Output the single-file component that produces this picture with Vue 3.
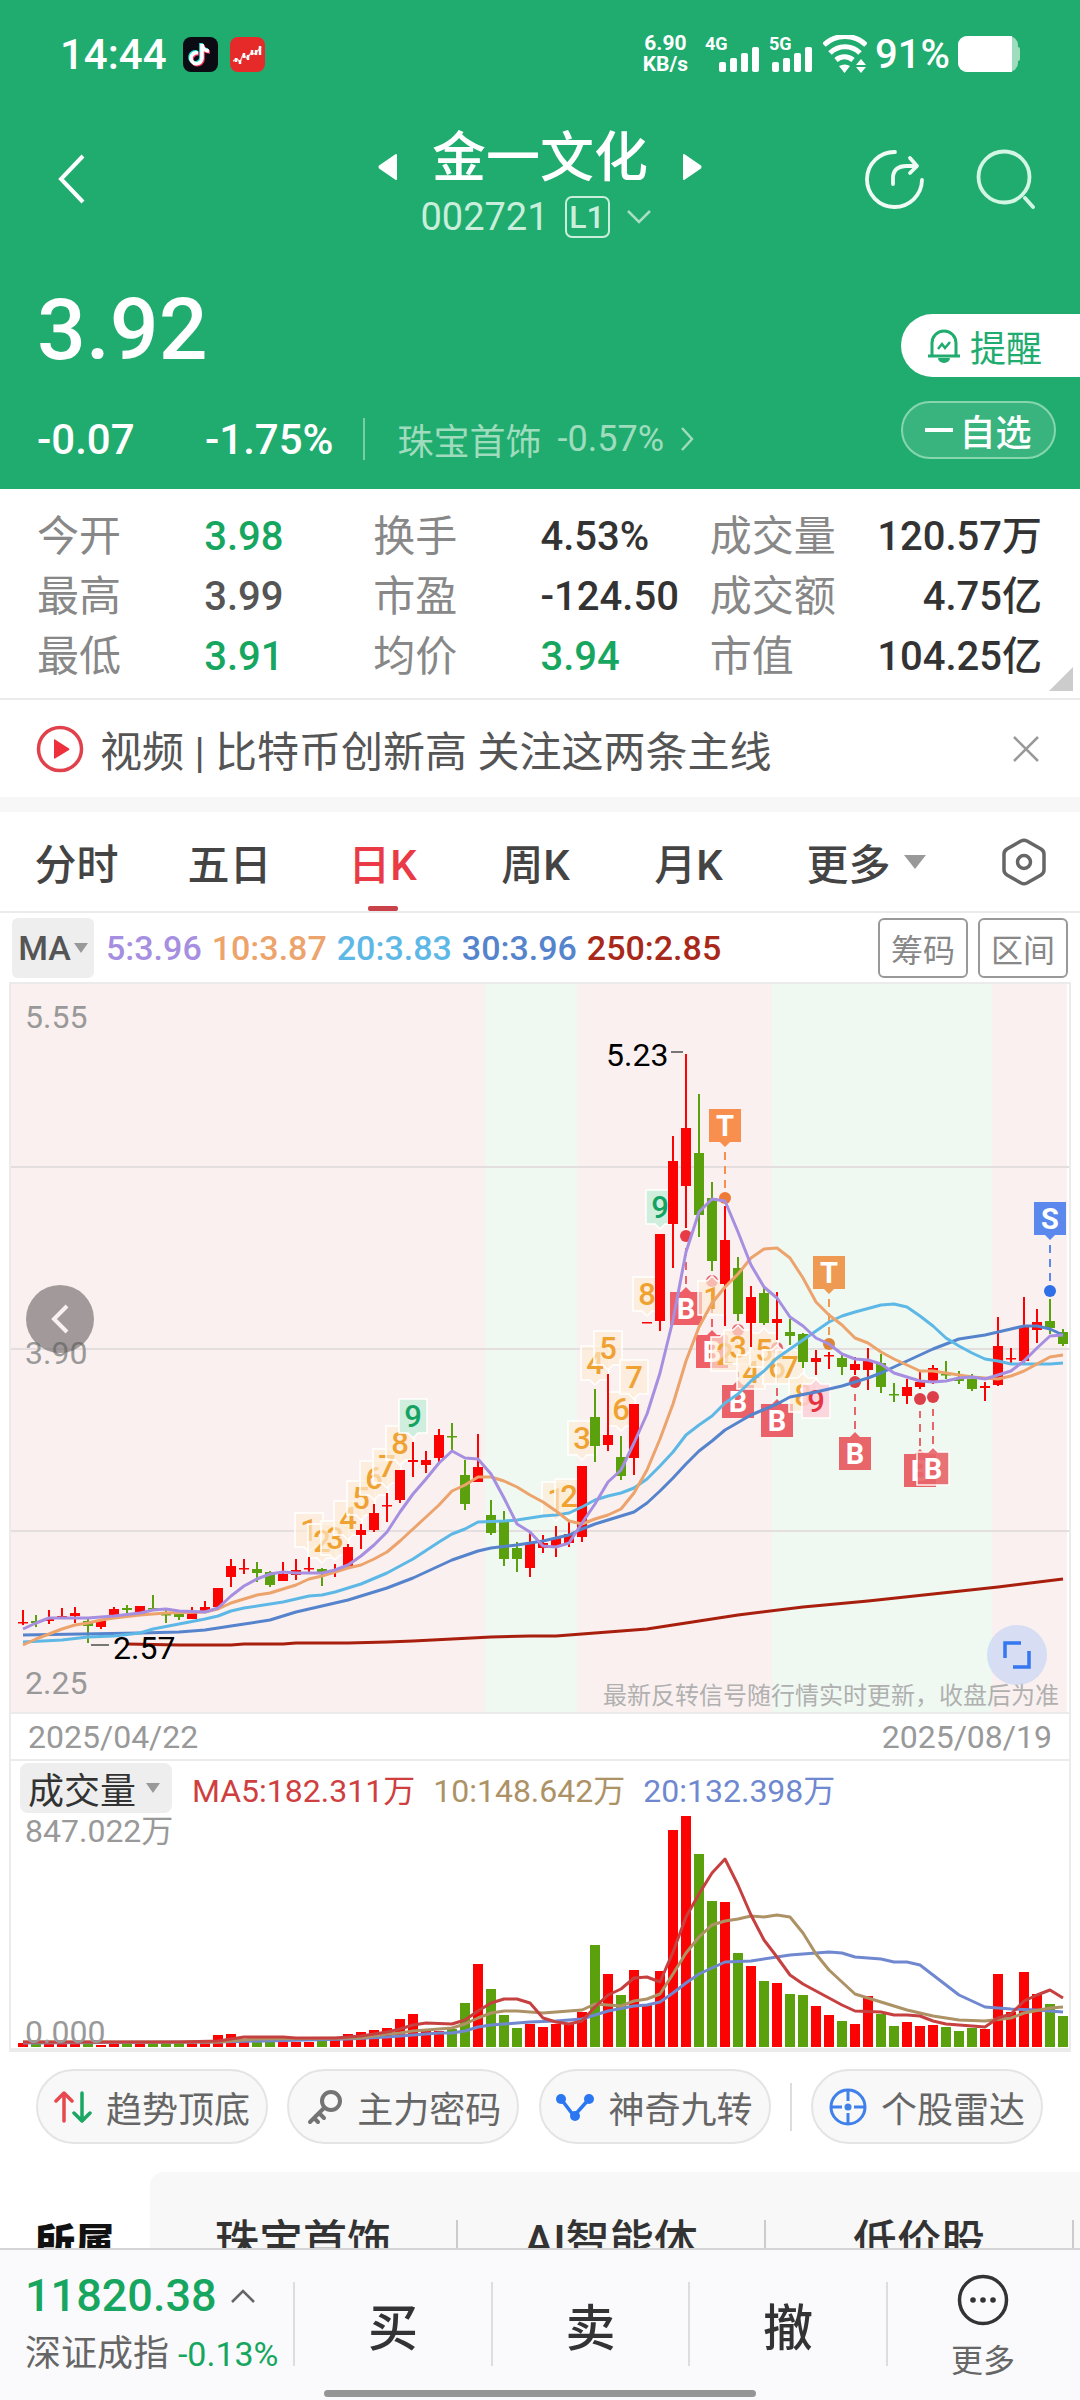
<template>
  <div class="page">
    <header class="header">
      <div class="status-bar">
        <span class="clock">14:44</span>
        <svg class="app-icon" viewBox="0 0 35 35">
          <rect width="35" height="35" rx="8" fill="#0b0b14" />
          <g fill="none" stroke-width="3.6">
            <path d="M15 16a5.5 5.5 0 1 0 4 5.5V7c0 4 3 7 7 7" stroke="#2ce5e0" transform="translate(-1 -1)" />
            <path d="M15 16a5.5 5.5 0 1 0 4 5.5V7c0 4 3 7 7 7" stroke="#f9335b" transform="translate(1 1)" />
            <path d="M15 16a5.5 5.5 0 1 0 4 5.5V7c0 4 3 7 7 7" stroke="#fff" />
          </g>
        </svg>
        <svg class="app-icon second" viewBox="0 0 35 35">
          <rect width="35" height="35" rx="8" fill="#e62a2a" />
          <path d="M3 24l4-2 3 3 3-7 4 3 4-5 4 1 6-7" fill="none" stroke="#ffc9c9" stroke-width="1.5" />
          <path d="M6 21v4M10 23v4M14 16v5M18 18v5M22 13v5M26 13v5M30 9v9" stroke="#fff" stroke-width="2.5" />
        </svg>
        <span class="speed">6.90<br />KB/s</span>
        <svg class="signal" viewBox="0 -8 110 48" role="img" aria-label="4G 5G">
          <g fill="#fff" font-family="Roboto" font-size="18" font-weight="700">
            <text x="0" y="16">4G</text>
            <text x="64" y="16">5G</text>
            <rect v-for="(h, i) in [10, 14, 19, 25]" :key="'a' + i" :x="14 + i * 11" :y="38 - h" width="7" :height="h" rx="2" />
            <rect v-for="(h, i) in [10, 14, 19, 25]" :key="'b' + i" :x="67 + i * 11" :y="38 - h" width="7" :height="h" rx="2" />
          </g>
        </svg>
        <svg class="wifi" viewBox="0 0 44 38">
          <g fill="none" stroke="#fff" stroke-width="5">
            <path d="M1 10a30 30 0 0 1 42 0" />
            <path d="M7 18a21 21 0 0 1 30 0" />
            <path d="M13 25a13 13 0 0 1 17 0" />
          </g>
          <path d="M16 31q6-3 11 0l-5.500 7zM33 30l5-6 5 6zM33 32h10l-5 6z" fill="#fff" />
        </svg>
        <span class="battery-text">91%</span>
        <svg class="battery" viewBox="0 0 62 36">
          <rect width="60" height="36" rx="9" fill="#9ddcbc" />
          <rect x="58" y="11" width="4" height="14" rx="2" fill="#9ddcbc" />
          <path d="M9 0H54V36H9a9 9 0 0 1-9-9V9a9 9 0 0 1 9-9z" fill="#fff" />
        </svg>
      </div>

      <nav class="nav">
        <button class="icon-btn back" aria-label="返回">
          <svg width="30" height="52" viewBox="0 0 30 52"><path d="M26 3L4 26l22 23" fill="none" stroke="#fff" stroke-width="4" /></svg>
        </button>
        <div class="title-box">
          <div class="title-row">
            <button class="icon-btn" aria-label="上一只">
              <svg width="20" height="28" viewBox="0 0 20 28"><path d="M18 2v24L2 15q-1-1 0-2z" fill="#fff" stroke="#fff" stroke-width="2" stroke-linejoin="round" /></svg>
            </button>
            <h1>金一文化</h1>
            <button class="icon-btn" aria-label="下一只">
              <svg width="20" height="28" viewBox="0 0 20 28"><path d="M2 2v24l16-11q1-1 0-2z" fill="#fff" stroke="#fff" stroke-width="2" stroke-linejoin="round" /></svg>
            </button>
          </div>
          <div class="code-row">
            <span>002721</span>
            <span class="level">L1</span>
            <svg width="26" height="16" viewBox="0 0 26 16"><path d="M2 2l11 11L24 2" fill="none" stroke="#a9dfc5" stroke-width="2.5" /></svg>
          </div>
        </div>
        <div class="nav-actions">
          <button class="icon-btn" aria-label="分享">
            <svg width="60" height="60" viewBox="0 0 60 60" fill="none" stroke="#f0fbf5" stroke-width="3.8" stroke-linecap="round" stroke-linejoin="round">
              <path d="M31 3A27.500 27.500 0 1 0 58 31" />
              <path d="M29 35v-6Q29 17 43 17h9" />
              <path d="M46 9l7 8-7 7" />
            </svg>
          </button>
          <button class="icon-btn" aria-label="搜索">
            <svg width="60" height="60" viewBox="0 0 60 60" fill="none" stroke="#d3f5e3" stroke-width="3.8" stroke-linecap="round">
              <circle cx="28" cy="28" r="25.5" />
              <path d="M49 49l8 9" />
            </svg>
          </button>
        </div>
      </nav>

      <div class="quote">
        <div class="quote-main">
          <strong class="price">3.92</strong>
          <div class="change-row">
            <span class="change">-0.07</span>
            <span>-1.75%</span>
            <a class="industry" href="#">
              <span>珠宝首饰</span>
              <span>-0.57%</span>
              <svg width="14" height="26" viewBox="0 0 14 26"><path d="M2 2l10 11L2 24" fill="none" stroke="#9fdcbe" stroke-width="2.5" /></svg>
            </a>
          </div>
        </div>
        <div class="quote-actions">
          <button class="remind">
            <svg width="34" height="36" viewBox="0 0 34 36" fill="none" stroke="#21ac6f" stroke-width="3">
              <path d="M5 28V15a12 12 0 0 1 24 0v13M1 28h32" />
              <path d="M11 30a6 5 0 0 0 12 0" fill="#21ac6f" stroke="none" />
              <path d="M11 21l4-5 3 4 5-6" stroke-width="2.5" />
            </svg>
            提醒
          </button>
          <button class="favorite"><i class="minus"></i>自选</button>
        </div>
      </div>
    </header>

    <dl class="stats">
      <template v-for="s in stats" :key="s[0]">
        <dt>{{ s[0] }}</dt>
        <dd :class="s[2]">{{ s[1] }}</dd>
      </template>
      <i class="corner"></i>
    </dl>

    <div class="news">
      <svg width="48" height="48" viewBox="0 0 48 48">
        <circle cx="24" cy="24" r="21.5" fill="none" stroke="#e1414b" stroke-width="3.5" />
        <path d="M18 15v18q0 1 1 .5l14-8.500q1-1 0-1.500L19 14.500q-1-.5-1 .5z" fill="#ee2f3c" />
      </svg>
      <a href="#">视频 | 比特币创新高 关注这两条主线</a>
      <button class="icon-btn" aria-label="关闭">
        <svg width="28" height="28" viewBox="0 0 28 28"><path d="M2 2l24 24M26 2L2 26" stroke="#999" stroke-width="2.5" /></svg>
      </button>
    </div>

    <div class="tabs">
      <button v-for="t in tabs" :key="t" :class="{ active: t === current }" @click="current = t">{{ t }}</button>
      <button class="more">更多<i class="caret"></i></button>
      <button class="setting" aria-label="设置">
        <svg width="44" height="48" viewBox="0 0 44 48" fill="none" stroke="#666" stroke-width="3.5">
          <path d="M19 3q3-1.500 6 0l14 8q3 2 3 5v16q0 3-3 5l-14 8q-3 1.500-6 0l-14-8q-3-2-3-5V16q0-3 3-5z" />
          <circle cx="22" cy="24" r="6.500" />
        </svg>
      </button>
    </div>

    <div class="ma-row">
      <button class="ma-btn">MA<i class="caret small"></i></button>
      <span v-for="m in maList" :key="m.text" :class="m.cls">{{ m.text }}</span>
      <button class="outline-btn first">筹码</button>
      <button class="outline-btn">区间</button>
    </div>

    <section class="panel">
      <div class="kline">
        <svg class="chart" viewBox="11 0 1058 728">
          <rect v-for="b in bands" :key="b[0]" :x="b[0]" y="0" :width="b[1] - b[0]" height="728" :fill="b[2]" />
          <path d="M11 183H1069M11 365H1069M11 547H1069" stroke="#e4dede" stroke-width="2" />

          <!-- 買賣點 -->
          <g v-for="s in signals" :key="s.type + s.i">
            <path :d="signalLine(s)" :stroke="s.color" stroke-width="2" stroke-dasharray="8 6" fill="none" />
            <circle :cx="px(s.i)" :cy="s.dot" r="6" :fill="s.dotColor" />
            <path :d="signalBox(s)" :fill="s.color" :stroke="s.edge || 'none'" stroke-width="1.5" :opacity="s.edge ? 0.9 : 1" />
            <text :x="px(s.i)" :y="s.box + 27" class="signal-text">{{ s.type }}</text>
          </g>

          <!-- 神奇九轉 -->
          <g v-for="t in turns" :key="'t' + t[0]">
            <path :d="turnBox(t)" :class="['turn', turnClass(t)]" />
            <text :x="px(t[0])" :y="t[2] + 28" :class="['turn-text', turnClass(t)]">{{ t[1] }}</text>
          </g>

          <g v-for="(c, i) in candles" :key="i" :fill="color(c)">
            <rect :x="px(i) - 1" :y="c[1]" width="2" :height="c[4] - c[1]" />
            <rect :x="px(i) - 5" :y="c[2]" width="10" :height="Math.max(c[3] - c[2], 1.5)" />
          </g>

          <path v-for="l in priceLines" :key="l.color" :d="linePath(l.pts)" :stroke="l.color" class="line" />

          <path d="M671 68h12M91 661h18" stroke="#777" stroke-width="2" />
          <g class="axis">
            <text x="25" y="44">5.55</text>
            <text x="25" y="380">3.90</text>
            <text x="25" y="710">2.25</text>
          </g>
          <g class="peak">
            <text x="606" y="82">5.23</text>
            <text x="113" y="675">2.57</text>
          </g>
          <text x="1059" y="720" class="note">最新反转信号随行情实时更新，收盘后为准</text>
        </svg>
        <button class="prev-btn" aria-label="向前">
          <svg width="18" height="32" viewBox="0 0 18 32"><path d="M16 3L3 16l13 13" fill="none" stroke="#faf0ef" stroke-width="4" /></svg>
        </button>
        <button class="full-btn" aria-label="全屏">
          <svg width="28" height="28" viewBox="0 0 28 28"><path d="M2 17V2h16M26 10v16H10" fill="none" stroke="#3477f0" stroke-width="3.500" /></svg>
        </button>
      </div>

      <div class="date-row">
        <span>2025/04/22</span>
        <span>2025/08/19</span>
      </div>

      <div class="volume-head">
        <button class="volume-btn">成交量<i class="caret small"></i></button>
        <span class="v5">MA5:182.311万</span>
        <span class="v10">10:148.642万</span>
        <span class="v20">20:132.398万</span>
      </div>
      <div class="volume">
        <svg class="chart" viewBox="11 0 1058 233">
          <rect v-for="(v, i) in volumes" :key="i" :x="px(i) - 5" :y="232 - v" width="10" :height="v" :fill="color(candles[i])" />
          <path v-for="l in volumeLines" :key="l.color" :d="linePath(l.pts, 232)" :stroke="l.color" class="line" />
        </svg>
        <span class="volume-max">847.022万</span>
        <span class="volume-min">0.000</span>
      </div>
    </section>

    <div class="tools">
      <button>
        <svg width="38" height="32" viewBox="0 0 38 32" fill="none" stroke-width="3.500" stroke-linecap="round" stroke-linejoin="round">
          <path d="M10 30V3M2 10l8-8 8 8" stroke="#e6484e" />
          <path d="M28 2v27M20 22l8 8 8-8" stroke="#1aa663" />
        </svg>
        趋势顶底
      </button>
      <button>
        <svg width="38" height="36" viewBox="0 0 38 36" fill="none" stroke="#747474" stroke-width="4" stroke-linecap="round">
          <circle cx="26" cy="12" r="9" />
          <path d="M19 19L5 33M14 24l5 5M9 29l4 4" />
        </svg>
        主力密码
      </button>
      <button>
        <svg width="38" height="32" viewBox="0 0 38 32">
          <path d="M5 8l13 17L33 8" fill="none" stroke="#2b77f2" stroke-width="3.500" />
          <g fill="#2b77f2"><circle cx="5" cy="8" r="5" /><circle cx="33" cy="8" r="5" /><circle cx="19" cy="25" r="5" /></g>
        </svg>
        神奇九转
      </button>
      <i class="divider"></i>
      <button>
        <svg width="38" height="38" viewBox="0 0 38 38" fill="none" stroke="#3f80ea" stroke-width="3">
          <circle cx="19" cy="19" r="17" />
          <path d="M19 2v11M19 25v11M2 19h11M25 19h11" />
          <circle cx="19" cy="19" r="3.500" fill="#3f80ea" stroke="none" />
        </svg>
        个股雷达
      </button>
    </div>

    <div class="sectors">
      <span class="belong">所属</span>
      <div class="sector-list">
        <a href="#">珠宝首饰</a>
        <a href="#">AI智能体</a>
        <a href="#">低价股</a>
      </div>
    </div>

    <footer class="footer">
      <div class="index">
        <div class="index-value">11820.38
          <svg width="26" height="16" viewBox="0 0 26 16"><path d="M2 14L13 3l11 11" fill="none" stroke="#666" stroke-width="2.500" /></svg>
        </div>
        <div class="index-name">深证成指 <span>-0.13%</span></div>
      </div>
      <button class="trade">买</button>
      <button class="trade">卖</button>
      <button class="trade">撤</button>
      <button class="footer-more">
        <svg width="52" height="52" viewBox="0 0 52 52">
          <circle cx="26" cy="26" r="23.500" fill="none" stroke="#333" stroke-width="3.500" />
          <g fill="#333"><circle cx="16" cy="26" r="2.800" /><circle cx="26" cy="26" r="2.800" /><circle cx="36" cy="26" r="2.800" /></g>
        </svg>
        更多
      </button>
      <i class="home-bar"></i>
    </footer>
  </div>
</template>

<script setup>
import { ref } from 'vue';

const stats = [
  ['今开', '3.98', 'down'], ['换手', '4.53%', ''], ['成交量', '120.57万', ''],
  ['最高', '3.99', 'flat'], ['市盈', '-124.50', ''], ['成交额', '4.75亿', ''],
  ['最低', '3.91', 'down'], ['均价', '3.94', 'down'], ['市值', '104.25亿', ''],
];

const tabs = ['分时', '五日', '日K', '周K', '月K'];
const current = ref('日K');

const maList = [
  { text: '5:3.96', cls: 'm5' },
  { text: '10:3.87', cls: 'm10' },
  { text: '20:3.83', cls: 'm20' },
  { text: '30:3.96', cls: 'm30' },
  { text: '250:2.85', cls: 'm250' },
];

const bands = [
  [11, 485, '#faf0ef'],
  [485, 577, '#eff9f2'],
  [577, 772, '#faf0ef'],
  [772, 992, '#eff9f2'],
  [992, 1067, '#faf0ef'],
];

// [漲跌, 最高, 實體上, 實體下, 最低]
const candles = [
  ['r', 626, 638, 639, 641], ['g', 631, 637, 639, 643], ['r', 626, 635, 637, 640], ['r', 624, 632, 633, 634],
  ['r', 623, 629, 632, 639], ['g', 635, 637, 642, 659], ['r', 635, 636, 643, 645], ['r', 623, 625, 631, 631],
  ['g', 621, 624, 626, 629], ['r', 622, 622, 631, 631], ['g', 611, 624, 625, 625], ['g', 625, 630, 631, 639],
  ['g', 629, 630, 633, 636], ['r', 623, 629, 635, 635], ['r', 617, 623, 627, 627], ['r', 604, 604, 623, 623],
  ['r', 575, 582, 593, 603], ['r', 575, 584, 585, 590], ['g', 578, 585, 589, 598], ['g', 587, 588, 601, 603],
  ['r', 578, 590, 597, 597], ['r', 575, 586, 591, 596], ['r', 573, 584, 585, 589], ['g', 584, 585, 589, 602],
  ['r', 580, 586, 588, 593], ['r', 560, 563, 582, 585], ['r', 540, 546, 551, 565], ['r', 520, 529, 546, 548],
  ['r', 509, 521, 522, 538], ['r', 486, 486, 516, 519], ['r', 458, 476, 478, 493], ['r', 467, 476, 481, 489],
  ['r', 445, 451, 474, 478], ['g', 439, 452, 453, 468], ['g', 476, 491, 520, 526], ['r', 450, 483, 498, 498],
  ['g', 516, 531, 549, 551], ['g', 527, 538, 575, 582], ['g', 558, 564, 575, 588], ['r', 548, 559, 584, 593],
  ['r', 551, 559, 564, 569], ['r', 542, 554, 562, 573], ['r', 536, 550, 559, 563], ['r', 482, 482, 553, 558],
  ['g', 405, 433, 462, 478], ['r', 390, 451, 461, 467], ['g', 452, 473, 492, 496], ['r', 420, 420, 474, 491],
  ['r', 338, 338, 339, 339], ['r', 250, 250, 337, 347], ['r', 152, 177, 240, 284], ['r', 70, 144, 202, 244],
  ['g', 110, 169, 231, 253], ['g', 198, 214, 277, 287], ['r', 222, 256, 300, 342], ['g', 273, 284, 330, 337],
  ['r', 302, 313, 339, 363], ['g', 303, 309, 339, 341], ['r', 308, 335, 339, 356], ['g', 335, 348, 352, 361],
  ['g', 349, 350, 378, 384], ['r', 366, 374, 378, 391], ['r', 368, 371, 372, 385], ['g', 371, 374, 383, 391],
  ['r', 373, 380, 386, 391], ['r', 364, 377, 386, 406], ['g', 370, 379, 403, 409], ['g', 399, 410, 411, 418],
  ['r', 395, 403, 412, 420], ['r', 388, 398, 403, 405], ['r', 381, 384, 397, 400], ['g', 377, 390, 391, 395],
  ['g', 387, 395, 397, 400], ['g', 390, 395, 405, 407], ['r', 398, 402, 404, 417], ['r', 333, 362, 401, 402],
  ['r', 364, 374, 375, 380], ['r', 313, 342, 377, 380], ['r', 325, 338, 346, 359], ['g', 315, 337, 344, 350],
  ['g', 345, 348, 360, 362],
];

const volumes = [
  4, 4, 4, 4, 4, 4, 2, 4, 4, 4, 5, 4, 4, 4, 4, 12, 13, 5, 5, 5, 5, 5, 5, 6, 7, 13, 15, 17, 19, 28, 33,
  16, 16, 18, 44, 83, 58, 32, 19, 23, 20, 23, 23, 35, 102, 73, 52, 77, 42, 76, 217, 231, 193, 146, 145,
  94, 81, 66, 64, 53, 52, 41, 32, 26, 23, 51, 33, 21, 25, 21, 22, 20, 16, 19, 18, 73, 35, 75, 53, 43, 31,
];

// 均線，依序為 [第幾根, 位置]
const priceLines = [
  {
    color: '#a81f0d',
    pts: [[8, 660], [12, 661], [16, 661], [17, 660], [20, 660], [21, 659], [25, 659], [28, 658], [30, 657], [33, 655], [36, 653], [39, 652], [41, 652], [43, 650], [45, 648], [48, 645], [51, 639], [55, 631], [60, 623], [65, 617], [70, 610], [75, 603], [80, 595]],
  },
  {
    color: '#5583cc',
    pts: [[0, 651], [9, 649], [12, 648], [14, 646], [16, 642], [19, 636], [21, 628], [25, 616], [28, 604], [30, 594], [32, 582], [33, 576], [35, 567], [36, 564], [38, 561], [40, 557], [42, 551], [43, 545], [44, 540], [45, 536], [46, 532], [47, 528], [48, 519], [49, 507], [50, 494], [51, 480], [52, 467], [53, 457], [54, 446], [56, 431], [58, 420], [59, 413], [61, 408], [63, 402], [65, 394], [66, 389], [67, 383], [68, 377], [70, 365], [71, 360], [72, 355], [74, 351], [76, 345], [77, 342], [78, 342], [79, 345], [80, 351]],
  },
  {
    color: '#5eb8e6',
    pts: [[0, 658], [3, 656], [5, 653], [7, 652], [9, 649], [10, 645], [12, 640], [14, 635], [15, 632], [16, 627], [17, 624], [20, 618], [22, 612], [23, 611], [24, 608], [26, 600], [28, 589], [30, 575], [32, 558], [33, 550], [34, 545], [35, 538], [37, 537], [38, 536], [40, 532], [41, 531], [42, 529], [43, 523], [44, 516], [45, 512], [46, 509], [47, 504], [48, 495], [49, 482], [50, 468], [51, 451], [52, 441], [53, 432], [54, 419], [55, 410], [56, 397], [57, 387], [58, 374], [59, 365], [60, 356], [61, 347], [62, 338], [63, 332], [64, 328], [66, 321], [67, 320], [68, 323], [69, 332], [70, 342], [71, 354], [72, 362], [73, 369], [74, 375], [75, 377], [76, 380], [79, 380], [80, 379]],
  },
  {
    color: '#eca36c',
    pts: [[0, 661], [1, 655], [2, 650], [3, 645], [4, 641], [5, 639], [6, 636], [7, 634], [9, 631], [11, 629], [14, 628], [15, 625], [16, 619], [17, 615], [18, 611], [19, 609], [20, 605], [21, 601], [22, 595], [23, 592], [24, 588], [25, 584], [26, 581], [27, 575], [28, 568], [29, 557], [30, 545], [31, 533], [32, 521], [33, 507], [34, 501], [35, 493], [36, 493], [37, 497], [38, 503], [39, 511], [40, 518], [41, 527], [42, 537], [43, 540], [44, 535], [45, 531], [46, 525], [47, 509], [48, 486], [49, 455], [50, 420], [51, 377], [52, 343], [53, 319], [54, 303], [55, 290], [56, 274], [57, 265], [58, 264], [59, 274], [60, 294], [61, 318], [62, 331], [63, 341], [64, 354], [65, 359], [66, 368], [67, 375], [68, 381], [69, 387], [70, 387], [71, 389], [72, 391], [73, 393], [75, 395], [76, 392], [77, 387], [78, 380], [79, 373], [80, 371]],
  },
  {
    color: '#a68fe0',
    pts: [[0, 645], [1, 639], [2, 634], [5, 634], [7, 632], [9, 629], [10, 626], [11, 625], [12, 627], [14, 628], [15, 624], [16, 612], [17, 602], [18, 595], [19, 590], [20, 588], [21, 589], [23, 589], [24, 586], [25, 581], [26, 572], [27, 561], [28, 548], [29, 528], [30, 510], [31, 495], [32, 479], [33, 467], [34, 474], [35, 475], [36, 490], [37, 514], [38, 540], [39, 548], [40, 562], [41, 563], [42, 559], [43, 539], [44, 520], [45, 498], [46, 486], [47, 459], [48, 430], [49, 389], [50, 336], [51, 268], [52, 228], [53, 215], [54, 217], [55, 248], [56, 281], [57, 303], [58, 314], [59, 333], [60, 342], [61, 354], [62, 360], [63, 370], [64, 375], [65, 376], [66, 380], [67, 389], [68, 393], [69, 397], [70, 398], [71, 397], [72, 394], [73, 393], [74, 395], [75, 391], [76, 387], [77, 377], [78, 364], [79, 352], [80, 351]],
  },
];

const volumeLines = [
  {
    color: '#6f88cf',
    pts: [[0, 4], [15, 5], [25, 8], [28, 10], [30, 12], [32, 14], [33, 14], [34, 16], [35, 20], [36, 22], [39, 25], [41, 26], [43, 28], [44, 32], [45, 36], [47, 41], [48, 42], [49, 45], [50, 54], [51, 64], [52, 73], [53, 79], [54, 85], [56, 86], [59, 92], [62, 95], [63, 94], [64, 90], [66, 88], [67, 85], [68, 85], [69, 82], [70, 72], [71, 62], [72, 52], [73, 46], [74, 40], [76, 38], [78, 37], [80, 35]],
  },
  {
    color: '#ad9265',
    pts: [[0, 5], [15, 5], [18, 8], [26, 9], [28, 13], [29, 14], [30, 16], [32, 18], [33, 19], [34, 23], [35, 29], [36, 34], [37, 36], [38, 36], [40, 34], [43, 37], [44, 43], [46, 41], [47, 46], [48, 48], [49, 53], [50, 73], [51, 94], [52, 110], [53, 122], [54, 126], [55, 128], [56, 131], [57, 130], [58, 132], [59, 130], [60, 114], [61, 93], [62, 77], [63, 65], [64, 53], [65, 49], [66, 45], [68, 37], [70, 31], [72, 27], [74, 26], [76, 29], [77, 34], [79, 39], [80, 40]],
  },
  {
    color: '#c64040',
    pts: [[0, 5], [12, 5], [15, 6], [17, 10], [20, 10], [21, 9], [24, 9], [26, 11], [28, 15], [29, 18], [30, 22], [31, 24], [33, 23], [34, 27], [35, 36], [36, 44], [37, 48], [38, 48], [39, 44], [40, 29], [41, 25], [42, 23], [43, 26], [44, 40], [45, 52], [46, 58], [47, 69], [48, 70], [49, 65], [50, 95], [51, 130], [52, 153], [53, 174], [54, 188], [55, 162], [56, 132], [57, 107], [58, 90], [59, 72], [60, 63], [61, 56], [62, 49], [63, 42], [64, 36], [66, 35], [67, 32], [68, 32], [69, 31], [70, 26], [71, 23], [73, 21], [74, 20], [75, 29], [76, 33], [77, 46], [78, 52], [79, 57], [80, 49]],
  },
];

const signals = [
  { type: 'B', i: 51, dot: 252, box: 308, color: '#ee5f68', dotColor: '#e93a47' },
  { type: 'B', i: 53, dot: 297, box: 351, color: '#ee5f68', dotColor: '#e9606a' },
  { type: 'B', i: 55, dot: 346, box: 401, color: '#ea616a', dotColor: '#e9606a' },
  { type: 'B', i: 58, dot: 364, box: 420, color: '#ea616a', dotColor: '#e9606a' },
  { type: 'B', i: 64, dot: 398, box: 453, color: '#e86569', dotColor: '#d94049' },
  { type: 'B', i: 69, dot: 415, box: 470, color: '#e86569', dotColor: '#dd3f48' },
  { type: 'B', i: 70, dot: 413, box: 468, color: '#e86569', dotColor: '#dd3f48', edge: '#fff' },
  { type: 'T', i: 54, dot: 214, box: 125, color: '#f98f4f', dotColor: '#ee7a35' },
  { type: 'T', i: 62, dot: 360, box: 272, color: '#ee9a52', dotColor: '#dd8433' },
  { type: 'S', i: 79, dot: 307, box: 218, color: '#5b88ec', dotColor: '#2f6fe8' },
];

// [第幾根, 數字, 框頂, 是否在下方]
const turns = [
  [22, 1, 529], [23, 2, 540], [24, 3, 537], [25, 4, 517], [26, 5, 497], [27, 6, 477], [28, 7, 465], [29, 8, 442], [30, 9, 415],
  [41, 1, 498], [42, 2, 495], [43, 3, 437], [44, 4, 362], [45, 5, 347], [46, 6, 408], [47, 7, 376], [48, 8, 293], [49, 9, 206],
  [53, 1, 297, true], [54, 2, 353, true], [55, 3, 346, true], [56, 4, 371, true], [57, 5, 349, true],
  [58, 6, 366, true], [59, 7, 366, true], [60, 8, 394, true], [61, 9, 400, true],
];

const px = (i) => 23 + i * 13;

const color = (c) => (c[0] === 'r' ? '#fb0303' : '#5ba10d');

const linePath = (pts, base) =>
  'M' + pts.map(([i, y]) => `${px(i)} ${base ? base - y : y}`).join('L');

const signalBox = (s) => {
  const x = px(s.i);
  const t = s.box;
  if (s.type === 'B') {
    return `M${x - 16} ${t}h11l5-5 5 5h11v33h-32z`;
  }
  return `M${x - 16} ${t}h32v33h-11l-5 5-5-5h-11z`;
};

const signalLine = (s) => {
  const x = px(s.i);
  return s.type === 'B' ? `M${x} ${s.box - 8}V${s.dot + 12}` : `M${x} ${s.box + 43}V${s.dot}`;
};

const turnBox = ([i, , t, below]) => {
  const x = px(i);
  if (below) {
    return `M${x - 14} ${t}h9l5-5 5 5h9v34h-28z`;
  }
  return `M${x - 14} ${t}h28v34h-9l-5 5-5-5h-9z`;
};

const turnClass = (t) => {
  if (t[1] !== 9) return 'normal';
  return t[3] ? 'buy' : 'sell';
};
</script>

<style>
body {
  background: #fff;
}
</style>

<style scoped>
.page {
  font-family: Roboto, "Noto Sans CJK SC", sans-serif;
  color: #333;
  background: #fff;
}

button {
  font: inherit;
  color: inherit;
  background: none;
  border: none;
  padding: 0;
  cursor: pointer;
}

a {
  color: inherit;
  text-decoration: none;
}

svg {
  display: block;
  flex-shrink: 0;
}

/* 頂部 */
.header {
  background: #21ac6f;
  color: #fff;
}

.status-bar {
  display: flex;
  align-items: center;
  height: 108px;
  padding: 0 60px;
}

.clock {
  font-size: 42px;
  font-weight: 500;
}

.app-icon {
  width: 35px;
  height: 35px;
  margin-left: 16px;
}

.app-icon.second {
  margin-left: 12px;
}

.speed {
  margin-left: auto;
  font-size: 21px;
  line-height: 21px;
  font-weight: 700;
  text-align: center;
}

.signal {
  width: 110px;
  height: 48px;
  margin: 0 8px 8px 17px;
}

.wifi {
  width: 44px;
  height: 38px;
}

.battery-text {
  margin: 0 8px;
  font-size: 40px;
  font-weight: 500;
}

.battery {
  width: 62px;
  height: 36px;
}

.nav {
  display: grid;
  grid-template-columns: 1fr auto 1fr;
  align-items: center;
  height: 142px;
  padding: 0 44px;
}

.icon-btn {
  display: flex;
}

.back {
  padding-left: 13px;
}

.title-box {
  padding-top: 12px;
}

.title-row {
  display: flex;
  align-items: flex-end;
  justify-content: center;
  gap: 34px;
}

.title-row .icon-btn {
  padding-bottom: 10px;
}

h1 {
  margin: 0;
  font-size: 54px;
  line-height: 64px;
  font-weight: 500;
}

.code-row {
  display: flex;
  align-items: center;
  justify-content: center;
  gap: 16px;
  height: 52px;
  font-size: 38px;
  color: #c9efdc;
}

.level {
  width: 41px;
  line-height: 38px;
  border: 2px solid #c9efdc;
  border-radius: 7px;
  font-size: 32px;
  font-weight: 500;
  text-align: center;
}

.code-row svg {
  margin-right: 8px;
}

.nav-actions {
  display: flex;
  justify-content: flex-end;
  gap: 52px;
}

.quote {
  display: flex;
  justify-content: space-between;
  padding: 30px 0 20px 37px;
}

.price {
  display: block;
  font-size: 86px;
  line-height: 100px;
  font-weight: 500;
}

.change-row {
  display: flex;
  align-items: center;
  height: 60px;
  margin-top: 29px;
  font-size: 42px;
  font-weight: 500;
}

.change {
  width: 168px;
}

.industry {
  display: flex;
  align-items: center;
  gap: 16px;
  height: 42px;
  margin-left: 30px;
  padding-left: 32px;
  border-left: 2px solid #7acda6;
  font-size: 36px;
  font-weight: 400;
  color: #9fdcbe;
}

.quote-actions {
  width: 179px;
  padding-top: 34px;
}

.remind {
  display: flex;
  align-items: center;
  gap: 9px;
  width: 100%;
  height: 63px;
  padding-left: 26px;
  border-radius: 32px 0 0 32px;
  background: #fff;
  color: #21ac6f;
  font-size: 36px;
}

.favorite {
  display: flex;
  align-items: center;
  justify-content: center;
  gap: 6px;
  width: 155px;
  height: 58px;
  margin-top: 24px;
  border: 2px solid #86d6ae;
  border-radius: 30px;
  background: #3ab47f;
  font-size: 36px;
  font-weight: 500;
}

.minus {
  width: 28px;
  height: 4px;
  background: #fff;
}

/* 行情數據 */
.stats {
  position: relative;
  display: grid;
  grid-template-columns: 167fr 169fr 167fr 169fr 140fr 192fr;
  margin: 0;
  padding: 18px 38px 11px 37px;
  border-bottom: 2px solid #ebebeb;
  line-height: 60px;
}

.stats dt {
  font-size: 42px;
  color: #888;
  white-space: nowrap;
}

.stats dd {
  margin: 0;
  font-size: 40px;
  font-weight: 500;
  white-space: nowrap;
}

.stats dd:nth-of-type(3n) {
  text-align: right;
}

.stats .down {
  color: #17a65f;
}

.stats .flat {
  color: #555;
}

.corner {
  position: absolute;
  right: 7px;
  bottom: 7px;
  border-left: 24px solid transparent;
  border-bottom: 24px solid #ccc;
}

.news {
  display: flex;
  align-items: center;
  gap: 16px;
  height: 97px;
  padding: 0 40px 0 36px;
  border-bottom: 15px solid #f7f7f7;
  font-size: 42px;
  color: #555;
}

.news .icon-btn {
  margin-left: auto;
}

.tabs {
  display: grid;
  grid-template-columns: repeat(5, 153fr) 202fr 113fr;
  height: 99px;
  border-bottom: 2px solid #ebebeb;
  font-size: 42px;
  font-weight: 500;
  color: #444;
}

.tabs button {
  position: relative;
  display: flex;
  align-items: center;
  justify-content: center;
}

.tabs .active {
  color: #e93a45;
}

.tabs .active::after {
  content: "";
  position: absolute;
  bottom: 0;
  width: 30px;
  height: 5px;
  border-radius: 2px;
  background: #ca4249;
}

.caret {
  margin-left: 13px;
  border: 11px solid transparent;
  border-top: 14px solid #999;
  border-bottom: none;
}

.caret.small {
  border-width: 10px 7px 0;
}

.ma-row {
  display: flex;
  align-items: center;
  gap: 10px;
  height: 69px;
  padding: 0 12px;
  font-size: 34px;
  font-weight: 500;
}

.ma-btn {
  display: flex;
  align-items: center;
  justify-content: center;
  width: 82px;
  height: 60px;
  margin-right: 2px;
  border-radius: 6px;
  background: #eee;
  color: #555;
}

.ma-btn .caret {
  margin-left: 3px;
}

.m5 { color: #a68fe0; }
.m10 { color: #eca36c; }
.m20 { color: #5eb8e6; }
.m30 { color: #5583cc; }
.m250 { color: #a8281a; }

.outline-btn {
  width: 90px;
  height: 60px;
  border: 2px solid #999;
  border-radius: 6px;
  font-size: 32px;
  font-weight: 400;
  color: #888;
}

.outline-btn.first {
  margin-left: auto;
}

/* K線 */
.panel {
  margin: 0 9px;
  border: 2px solid #ebebeb;
  border-bottom-width: 4px;
}

.kline,
.volume {
  position: relative;
}

.chart {
  width: 100%;
  height: auto;
}

.line {
  fill: none;
  stroke-width: 3;
  stroke-linejoin: round;
}

.axis {
  font-size: 32px;
  fill: #999;
}

.peak {
  font-size: 32px;
  fill: #000;
}

.note {
  font-size: 24px;
  fill: #b0b0b0;
  text-anchor: end;
}

.signal-text {
  font-size: 29px;
  font-weight: 700;
  fill: #fff;
  text-anchor: middle;
}

.turn {
  stroke: #fff;
  stroke-width: 1.5;
}

.turn.normal { fill: rgba(254, 235, 212, 0.65); }
.turn.sell { fill: #d0eede; }
.turn.buy { fill: rgba(253, 208, 217, 0.85); }

.turn-text {
  font-size: 31px;
  font-weight: 500;
  text-anchor: middle;
}

.turn-text.normal { fill: #efa232; }
.turn-text.sell { fill: #14a262; }
.turn-text.buy { fill: #e63344; }

.prev-btn,
.full-btn {
  position: absolute;
  display: flex;
  align-items: center;
  justify-content: center;
  border-radius: 50%;
}

.prev-btn {
  left: 15px;
  top: 46%;
  width: 68px;
  height: 68px;
  transform: translateY(-50%);
  background: rgba(90, 84, 84, 0.55);
}

.full-btn {
  right: 22px;
  bottom: 27px;
  width: 60px;
  height: 60px;
  background: rgba(200, 212, 245, 0.7);
}

.date-row {
  display: flex;
  justify-content: space-between;
  align-items: center;
  height: 45px;
  padding: 0 17px;
  border-top: 2px solid #ebebeb;
  border-bottom: 2px solid #ebebeb;
  font-size: 32px;
  color: #999;
}

.volume-head {
  display: flex;
  align-items: center;
  gap: 18px;
  height: 54px;
  padding-left: 9px;
  font-size: 32px;
}

.volume-btn {
  display: flex;
  align-items: center;
  width: 152px;
  height: 50px;
  margin-right: 2px;
  padding-left: 8px;
  border-radius: 8px;
  background: #eee;
  font-size: 36px;
}

.volume-btn .caret {
  margin-left: 10px;
}

.v5 { color: #cf3f40; }
.v10 { color: #ad9265; }
.v20 { color: #6f88cf; }

.volume-max,
.volume-min {
  position: absolute;
  left: 14px;
  font-size: 32px;
  line-height: 32px;
  color: #999;
}

.volume-max {
  top: 0;
}

.volume-min {
  bottom: 0;
}

/* 工具 */
.tools {
  display: flex;
  align-items: center;
  justify-content: space-between;
  padding: 17px 37px 28px 36px;
}

.tools button {
  display: flex;
  align-items: center;
  justify-content: center;
  gap: 14px;
  width: 232px;
  height: 75px;
  border: 2px solid #e4e4e4;
  border-radius: 38px;
  background: #f8f8f8;
  font-size: 36px;
  color: #666;
  white-space: nowrap;
}

.divider {
  width: 2px;
  height: 48px;
  background: #ddd;
}

.sectors {
  display: flex;
  height: 140px;
}

.belong {
  width: 150px;
  padding-left: 35px;
  box-sizing: border-box;
  line-height: 144px;
  font-size: 40px;
  font-weight: 900;
  color: #111;
}

.sector-list {
  flex: 1;
  display: grid;
  grid-template-columns: repeat(3, 1fr);
  align-items: center;
  border-radius: 14px 0 0 0;
  background: #f8f8f8;
  padding-right: 6px;
}

.sector-list a {
  border-right: 2px solid #ccc;
  line-height: 44px;
  font-size: 44px;
  font-weight: 500;
  text-align: center;
}

/* 底部 */
.footer {
  position: fixed;
  left: 0;
  right: 0;
  bottom: 0;
  display: grid;
  grid-template-columns: 293fr 198fr 197fr 198fr 194fr;
  height: 150px;
  border-top: 2px solid #d5d5d8;
  background: #fafafc;
}

.index {
  padding: 16px 0 0 25px;
}

.index-value {
  display: flex;
  align-items: center;
  gap: 13px;
  font-size: 45px;
  line-height: 60px;
  font-weight: 500;
  color: #17a65f;
}

.index-name {
  font-size: 36px;
  line-height: 56px;
  color: #666;
  white-space: nowrap;
}

.index-name span {
  font-size: 34px;
  color: #17a65f;
}

.trade {
  height: 84px;
  margin-top: 32px;
  border-left: 2px solid #ddd;
  font-size: 50px;
  font-weight: 500;
}

.footer-more {
  display: flex;
  flex-direction: column;
  align-items: center;
  padding-top: 24px;
  font-size: 32px;
  color: #666;
  position: relative;
}

.footer-more svg {
  margin-bottom: 9px;
}

.trade + .footer-more::before {
  content: "";
  position: absolute;
  left: 0;
  top: 32px;
  height: 84px;
  border-left: 2px solid #ddd;
}

.home-bar {
  position: absolute;
  left: 30%;
  right: 30%;
  bottom: 3px;
  height: 7px;
  border-radius: 4px;
  background: #959595;
}
</style>
